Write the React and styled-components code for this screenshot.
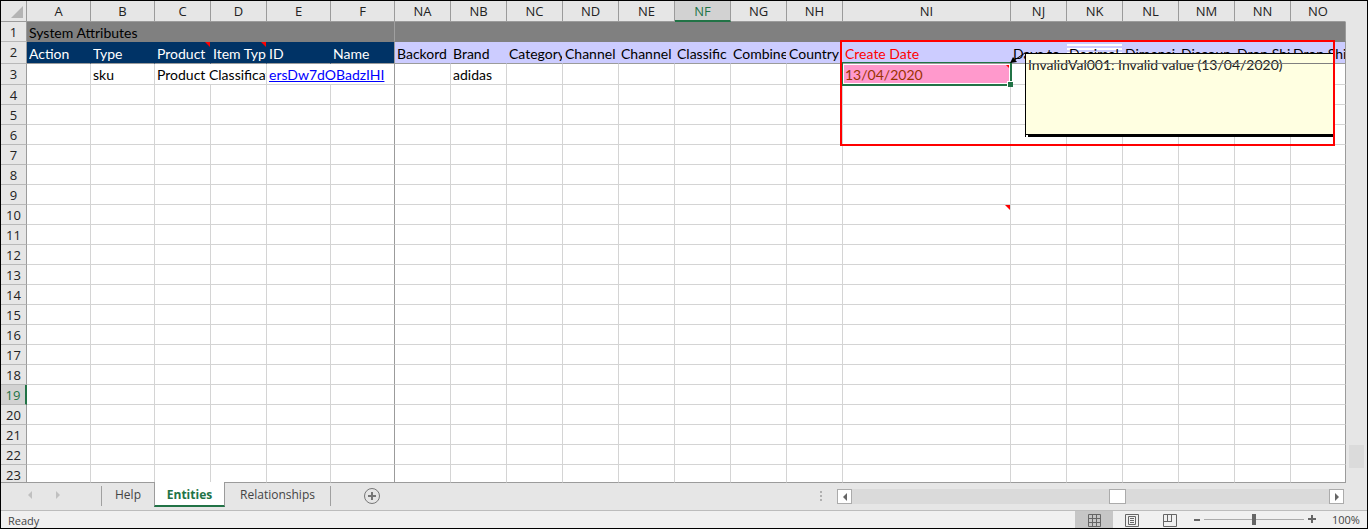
import React from "react";
import styled, { createGlobalStyle, css } from "styled-components";

const GlobalStyle = createGlobalStyle`
  *, *::before, *::after { box-sizing: border-box; }
  body { margin: 0; background: #fff; font-family: "Open Sans", "Noto Sans", sans-serif; }
  button { font: inherit; padding: 0; border: 0; background: none; cursor: pointer; }
`;

const COLOR = {
  chrome: "#e6e6e6",
  line: "#9b9b9b",
  grid: "#d4d4d4",
  green: "#217346",
  lavender: "#ccccff",
};

const Workbook = styled.main`
  border: 1px solid #000;
  background: ${COLOR.chrome};
  overflow: hidden;
`;

const SheetArea = styled.section`
  display: flex;
`;

const Grid = styled.table`
  flex: 1;
  min-width: 0;
  width: 100%;
  table-layout: fixed;
  border-collapse: separate;
  border-spacing: 0;
  background: #fff;
  font-family: Lato, sans-serif;
  font-size: 14px;
  line-height: 15px;
  color: #000;
`;

const Row = styled.tr`
  height: ${(p) => p.$height}px;
`;

const HeadCell = styled.th`
  padding: 3px 0 0;
  vertical-align: top;
  font-family: "Open Sans", sans-serif;
  font-size: 13px;
  font-weight: 400;
  color: ${(p) => (p.$active ? COLOR.green : "#222")};
  background: ${(p) => (p.$active ? "#d2d2d2" : COLOR.chrome)};
`;

const ColumnHead = styled(HeadCell)`
  border-right: 1px solid ${COLOR.line};
  border-bottom: ${(p) => (p.$active ? `2px solid ${COLOR.green}` : `1px solid ${COLOR.line}`)};
  ${(p) => p.$last && css`border-right-color: ${COLOR.chrome};`}
`;

const RowHead = styled(HeadCell)`
  line-height: 14px;
  border-right: ${(p) => (p.$active ? `2px solid ${COLOR.green}` : `1px solid ${COLOR.line}`)};
  border-bottom: 1px solid ${(p) => (p.$last ? COLOR.line : "#b8b8b8")};
`;

const Corner = styled(ColumnHead)`
  padding: 5px 3px 0 0;
  text-align: right;
  svg { display: block; margin-left: auto; }
`;

const Cell = styled.td`
  position: relative;
  padding: 3px 0 0 2px;
  vertical-align: top;
  border-right: 1px solid ${(p) => (p.$freeze || p.$edge ? COLOR.line : COLOR.grid)};
  border-bottom: 1px solid ${(p) => (p.$last ? COLOR.line : COLOR.grid)};
`;

const BandCell = styled(Cell)`
  background: #808080;
  border-bottom-color: #808080;
  border-right-color: ${(p) => (p.$freeze ? "#a0a0a0" : COLOR.line)};
`;

const AttributeCell = styled(Cell)`
  padding-top: 4px;
  color: ${(p) => (p.$system ? "#fff" : p.$invalid ? "#ff0000" : "#000")};
  background: ${(p) => (p.$system ? "#003366" : COLOR.lavender)};
  border-bottom-color: ${COLOR.line};
  border-right-color: ${(p) => (p.$freeze || p.$edge ? COLOR.line : p.$system ? "#003366" : COLOR.lavender)};
  ${(p) =>
    p.$striped &&
    css`
      background: linear-gradient(#fff, #fff) 0 2px / 100% 2px no-repeat,
        linear-gradient(#fff, #fff) 0 6px / 100% 2px no-repeat,
        linear-gradient(#fff, #fff) 0 10px / 100% 2px no-repeat, ${COLOR.lavender};
    `}
`;

const Clip = styled.span`
  display: block;
  overflow: hidden;
  white-space: nowrap;
  height: 17px;
`;

const DataCell = Cell;

const InvalidCell = styled(DataCell)`
  color: #993300;
  background: #ff99cc;
`;

const CellLink = styled.a`
  color: #0000ff;
  text-decoration: underline;
`;

const NoteMark = styled.i`
  position: absolute;
  top: 0;
  right: 0;
  width: 5px;
  height: 5px;
  background: #ff0000;
  clip-path: polygon(0 0, 100% 0, 100% 100%);
`;

const Selection = styled.div`
  position: absolute;
  inset: -2px -2px -2px -1px;
  border: solid ${COLOR.green};
  border-width: 1px 2px 2px 1px;
  z-index: 2;
  &::before {
    content: "";
    position: absolute;
    inset: 1px 0 0 0;
    border: 1px solid #fff;
  }
  &::after {
    content: "";
    position: absolute;
    right: -3px;
    bottom: -3px;
    width: 6px;
    height: 6px;
    background: ${COLOR.green};
    border: solid #fff;
    border-width: 1px 0 0 1px;
  }
`;

const Highlight = styled.div`
  position: absolute;
  top: -2px;
  left: -3px;
  width: 495px;
  height: 106px;
  border: 2px solid #ff0000;
  z-index: 4;
`;

const Note = styled.aside`
  position: absolute;
  top: 11px;
  left: 182px;
  width: 308px;
  height: 84px;
  border: solid #000;
  border-width: 1px 0 0 1px;
  background: linear-gradient(#000, #000) 2px 100% / 100% 3px no-repeat,
    linear-gradient(#000, #000) 0 80px / 100% 1px no-repeat,
    linear-gradient(#ffffe1, #ffffe1) 0 0 / 100% 81px no-repeat;
  color: #222;
  padding: 2px;
  font-size: 14px;
  line-height: 17px;
  white-space: nowrap;
  z-index: 3;
  &::after {
    content: "";
    position: absolute;
    top: 9px;
    left: 0;
    right: 0;
    height: 1px;
    background: #808080;
  }
`;

const NoteArrow = styled.svg`
  position: absolute;
  top: 10px;
  left: 167px;
  z-index: 3;
`;

const VerticalScroll = styled.div`
  flex: 0 0 21px;
  display: flex;
  flex-direction: column;
  justify-content: flex-end;
  padding: 0 3px 15px;
`;

const VerticalThumb = styled.div`
  height: 23px;
  background: #dbdbdb;
`;

const TabStrip = styled.nav`
  display: flex;
  height: 28px;
  border-bottom: 1px solid #bcbcbc;
  font-size: 12px;
  color: #444;
`;

const TabArrows = styled.div`
  display: flex;
  align-items: center;
  width: 100px;
  height: 24px;
  padding-left: 23px;
  gap: 16px;
  button { display: flex; width: 12px; justify-content: center; }
`;

const Tab = styled.button`
  height: 23px;
  position: relative;
  color: ${(p) => (p.$active ? COLOR.green : "#444")};
  width: ${(p) => p.$width}px;
  ${(p) =>
    p.$active &&
    css`
      && {
        font-weight: 700;
        background: #fff;
        border: solid ${COLOR.line};
        border-width: 0 1px;
        border-bottom: 2px solid ${COLOR.green};
        margin-top: -1px;
        height: 25px;
        padding-top: 2px;
      }
    `}
`;

const TabDivider = styled.span`
  width: 1px;
  height: 20px;
  margin-top: 3px;
  background: #a0a0a0;
`;

const AddSheet = styled.button`
  display: flex;
  margin: 4px 0 0 32px;
  height: 18px;
`;

const Grip = styled.div`
  display: grid;
  gap: 2px;
  align-content: start;
  margin: 8px 15px 0 auto;
  i { width: 2px; height: 2px; background: #b0b0b0; }
`;

const HorizontalScroll = styled.div`
  display: flex;
  width: 507px;
  height: 15px;
  margin: 6px 23px 0 0;
  background: #dadada;
`;

const ScrollButton = styled.button`
  && {
    display: flex;
    align-items: center;
    justify-content: center;
    width: 15px;
    background: #fff;
    border: 1px solid #ababab;
  }
`;

const ScrollTrack = styled.div`
  flex: 1;
  display: flex;
  justify-content: flex-end;
  padding-right: 203px;
`;

const HorizontalThumb = styled.div`
  width: 17px;
  background: #fff;
  border: 1px solid #ababab;
`;

const StatusBar = styled.footer`
  display: flex;
  align-items: center;
  height: 17px;
  padding: 0 7px;
  background: #f0f0f0;
  font-size: 11px;
  line-height: 17px;
  color: #444;
`;

const StatusText = styled.span`
  margin-right: auto;
  padding-top: 2px;
`;

const ViewButton = styled.button`
  display: flex;
  align-items: flex-end;
  justify-content: center;
  width: 38px;
  height: 17px;
  && {
    padding-bottom: 1px;
    background: ${(p) => (p.$active ? "#c6c6c6" : "transparent")};
  }
`;

const ZoomButton = styled.button`
  display: flex;
  align-items: center;
  height: 17px;
`;

const ZoomRange = styled.input`
  appearance: none;
  width: 100px;
  height: 11px;
  margin: 0 4px;
  background: linear-gradient(#ababab, #ababab) center / 100% 1px no-repeat;
  &::-webkit-slider-thumb {
    appearance: none;
    width: 4px;
    height: 11px;
    background: #666;
  }
`;

const ZoomLabel = styled.output`
  width: 28px;
  margin-left: 15px;
  white-space: nowrap;
`;

const Triangle = ({ left, color, size = 8 }) => (
  <svg width={size / 2} height={size} viewBox="0 0 4 8" aria-hidden="true">
    <path d={left ? "M4 0v8L0 4z" : "M0 0v8l4-4z"} fill={color} />
  </svg>
);

const COLUMNS = [
  ["A", 64], ["B", 64], ["C", 56], ["D", 56], ["E", 64], ["F", 64],
  ["NA", 56], ["NB", 56], ["NC", 56], ["ND", 56], ["NE", 56], ["NF", 56],
  ["NG", 56], ["NH", 56], ["NI", 168], ["NJ", 56], ["NK", 56], ["NL", 56],
  ["NM", 56], ["NN", 56], ["NO", null],
];

const ATTRIBUTES = [
  "Action", "Type", "Product", "Item Type", "ID", "Name",
  "Backord", "Brand", "Category", "Channel", "Channel", "Classific",
  "Combine", "Country", "Create Date", "Days to", "Decimal", "Dimensi",
  "Discoun", "Drop Shi", "Drop Shi",
];

const FREEZE = 5;
const EDGE = COLUMNS.length - 1;
const NOTED = ["C", "D"];
const EMPTY_ROWS = Array.from({ length: 20 }, (_, i) => i + 4);

const LastRow = styled(Row)`
  line-height: 14px;
  ${HeadCell} { line-height: 14px; }
`;

const span = (from, to) =>
  COLUMNS.slice(from, to).map(([name], i) => (
    <DataCell key={name} $freeze={from + i === FREEZE} $edge={from + i === EDGE} />
  ));

function Spreadsheet() {
  return (
    <Grid>
      <colgroup>
        <col style={{ width: 26 }} />
        {COLUMNS.map(([name, width]) => (
          <col key={name} style={width ? { width } : undefined} />
        ))}
      </colgroup>
      <thead>
        <Row $height={21}>
          <Corner aria-label="Select all">
            <svg width="12" height="12" viewBox="0 0 12 12">
              <path d="M12 0v12H0z" fill="#b4b4b4" />
            </svg>
          </Corner>
          {COLUMNS.map(([name], i) => (
            <ColumnHead key={name} scope="col" $active={name === "NF"} $last={i === EDGE}>
              {name}
            </ColumnHead>
          ))}
        </Row>
      </thead>
      <tbody>
        <Row $height={20}>
          <RowHead scope="row">1</RowHead>
          <BandCell colSpan={6} $freeze>System Attributes</BandCell>
          <BandCell colSpan={15} $edge />
        </Row>
        <Row $height={22}>
          <RowHead scope="row">2</RowHead>
          {ATTRIBUTES.map((label, i) => {
            const name = COLUMNS[i][0];
            return (
              <AttributeCell
                key={name}
                $system={i <= FREEZE}
                $freeze={i === FREEZE}
                $edge={i === EDGE}
                $invalid={name === "NI"}
                $striped={name === "NK"}
              >
                <Clip>{label}</Clip>
                {NOTED.includes(name) && <NoteMark />}
                {name === "NI" && (
                  <>
                    <NoteArrow width="16" height="12" viewBox="0 0 16 12" aria-hidden="true">
                      <path d="M15 1L3 9" stroke="#000" />
                      <path d="M0 11l3-6 4 5z" fill="#000" />
                    </NoteArrow>
                    <Note>InvalidVal001: Invalid value (13/04/2020)</Note>
                    <Highlight />
                  </>
                )}
              </AttributeCell>
            );
          })}
        </Row>
        <Row $height={21}>
          <RowHead scope="row">3</RowHead>
          <DataCell />
          <DataCell>sku</DataCell>
          <DataCell colSpan={2}>
            <Clip>Product Classification</Clip>
          </DataCell>
          <DataCell colSpan={2} $freeze>
            <CellLink href="#entity">ersDw7dOBadzIHI</CellLink>
          </DataCell>
          <DataCell />
          <DataCell>adidas</DataCell>
          {span(8, 14)}
          <InvalidCell>
            13/04/2020
            <NoteMark />
            <Selection />
          </InvalidCell>
          {span(15, 21)}
        </Row>
        {EMPTY_ROWS.map((n) => {
          const last = n === 23;
          const Line = last ? LastRow : Row;
          return (
            <Line key={n} $height={last ? 18 : 20}>
              <RowHead scope="row" $active={n === 19} $last={last}>{n}</RowHead>
              {COLUMNS.map(([name], i) => (
                <Cell key={name} $freeze={i === FREEZE} $edge={i === EDGE} $last={last}>
                  {n === 10 && name === "NI" && <NoteMark />}
                </Cell>
              ))}
            </Line>
          );
        })}
      </tbody>
    </Grid>
  );
}

export default function App() {
  return (
    <>
      <GlobalStyle />
      <Workbook>
        <SheetArea>
          <Spreadsheet />
          <VerticalScroll>
            <VerticalThumb />
          </VerticalScroll>
        </SheetArea>
        <TabStrip aria-label="Sheets">
          <TabArrows>
            <button aria-label="Previous sheets"><Triangle left color="#c0c0c0" /></button>
            <button aria-label="Next sheets"><Triangle color="#c0c0c0" /></button>
          </TabArrows>
          <TabDivider />
          <Tab $width={52}>Help</Tab>
          <Tab $width={71} $active>Entities</Tab>
          <Tab $width={105}>Relationships</Tab>
          <TabDivider />
          <AddSheet aria-label="Add sheet">
            <svg width="18" height="18" viewBox="0 0 18 18" fill="none" stroke="#777">
              <circle cx="9" cy="9" r="7.5" />
              <path d="M9 5v8M5 9h8" strokeWidth="2" />
            </svg>
          </AddSheet>
          <Grip><i /><i /><i /></Grip>
          <HorizontalScroll>
            <ScrollButton aria-label="Scroll left"><Triangle left color="#666" /></ScrollButton>
            <ScrollTrack><HorizontalThumb /></ScrollTrack>
            <ScrollButton aria-label="Scroll right"><Triangle color="#666" /></ScrollButton>
          </HorizontalScroll>
        </TabStrip>
        <StatusBar>
          <StatusText>Ready</StatusText>
          <ViewButton $active aria-label="Normal view">
            <svg width="13" height="13" viewBox="0 0 13 13" fill="none" stroke="#666">
              <path d="M.5 .5h12v12H.5zM4.5 0v13M8.5 0v13M0 4.5h13M0 8.5h13" />
            </svg>
          </ViewButton>
          <ViewButton aria-label="Page layout view">
            <svg width="14" height="13" viewBox="0 0 14 13" fill="none" stroke="#666">
              <path d="M.5 .5h13v12H.5zM3.5 2.5h7v8h-7zM5 4.5h4M5 6.5h4M5 8.5h4" />
            </svg>
          </ViewButton>
          <ViewButton aria-label="Page break preview">
            <svg width="14" height="13" viewBox="0 0 14 13" fill="none" stroke="#666">
              <path d="M.5 .5h13v12H.5zM4.5 0v7.5M8.5 0v7.5M0 7.5h9" />
            </svg>
          </ViewButton>
          <ZoomButton aria-label="Zoom out">
            <svg width="11" height="9" viewBox="0 0 11 9"><path d="M5 4h6v2H5z" fill="#666" /></svg>
          </ZoomButton>
          <ZoomRange type="range" min="0" max="200" defaultValue="100" aria-label="Zoom" />
          <ZoomButton aria-label="Zoom in">
            <svg width="9" height="9" viewBox="0 0 9 9"><path d="M0 4h8M4 0v8" stroke="#666" strokeWidth="2" /></svg>
          </ZoomButton>
          <ZoomLabel>100%</ZoomLabel>
        </StatusBar>
      </Workbook>
    </>
  );
}
